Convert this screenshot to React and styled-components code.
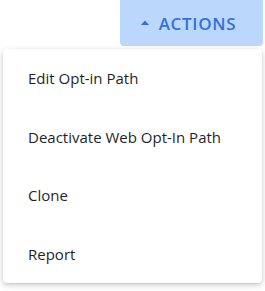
import React from "react";
import styled, { createGlobalStyle } from "styled-components";

const GlobalStyle = createGlobalStyle`
  html, body {
    margin: 0;
    padding: 0;
    background: #ffffff;
  }
  body {
    font-family: "Open Sans", "Noto Sans", sans-serif;
  }
`;

const items = [
  "Edit Opt-in Path",
  "Deactivate Web Opt-In Path",
  "Clone",
  "Report",
];

const App = () => {
  return (
    <>
      <GlobalStyle />
      <Wrapper>
        <ButtonRow>
          <ActionsButton>
            <Caret viewBox="0 0 10 6">
              <path d="M0 6 L5 0.5 L10 6 Z" />
            </Caret>
            Actions
          </ActionsButton>
        </ButtonRow>
        <Menu>
          {items.map((label) => (
            <MenuItem key={label}>{label}</MenuItem>
          ))}
        </Menu>
      </Wrapper>
    </>
  );
};

const Wrapper = styled.div`
  width: 265px;
  height: 291px;
  display: flex;
  flex-direction: column;
`;

const ButtonRow = styled.div`
  display: flex;
  justify-content: flex-end;
  padding-right: 2px;
`;

const ActionsButton = styled.button`
  width: 143px;
  height: 46px;
  display: flex;
  align-items: center;
  justify-content: center;
  gap: 10px;
  border: none;
  border-radius: 0 0 4px 4px;
  background: #bbd7fb;
  color: #3470db;
  font-family: "Open Sans", "Noto Sans", sans-serif;
  font-size: 17px;
  font-weight: 600;
  letter-spacing: 0.7px;
  text-transform: uppercase;
  padding: 0 6px 0 0;
`;

const Caret = styled.svg`
  width: 8px;
  height: 5px;
  fill: currentColor;
  margin-top: -1px;
`;

const Menu = styled.ul`
  list-style: none;
  margin: 3px 3px 0 3px;
  padding: 0;
  background: #ffffff;
  border-radius: 4px;
  box-shadow: 0 2px 6px rgba(0, 0, 0, 0.2), 0 1px 2px rgba(0, 0, 0, 0.08);
`;

const MenuItem = styled.li`
  height: 58.5px;
  display: flex;
  align-items: center;
  padding-left: 25px;
  font-size: 15px;
  color: #1f1f2b;
`;

export default App;
